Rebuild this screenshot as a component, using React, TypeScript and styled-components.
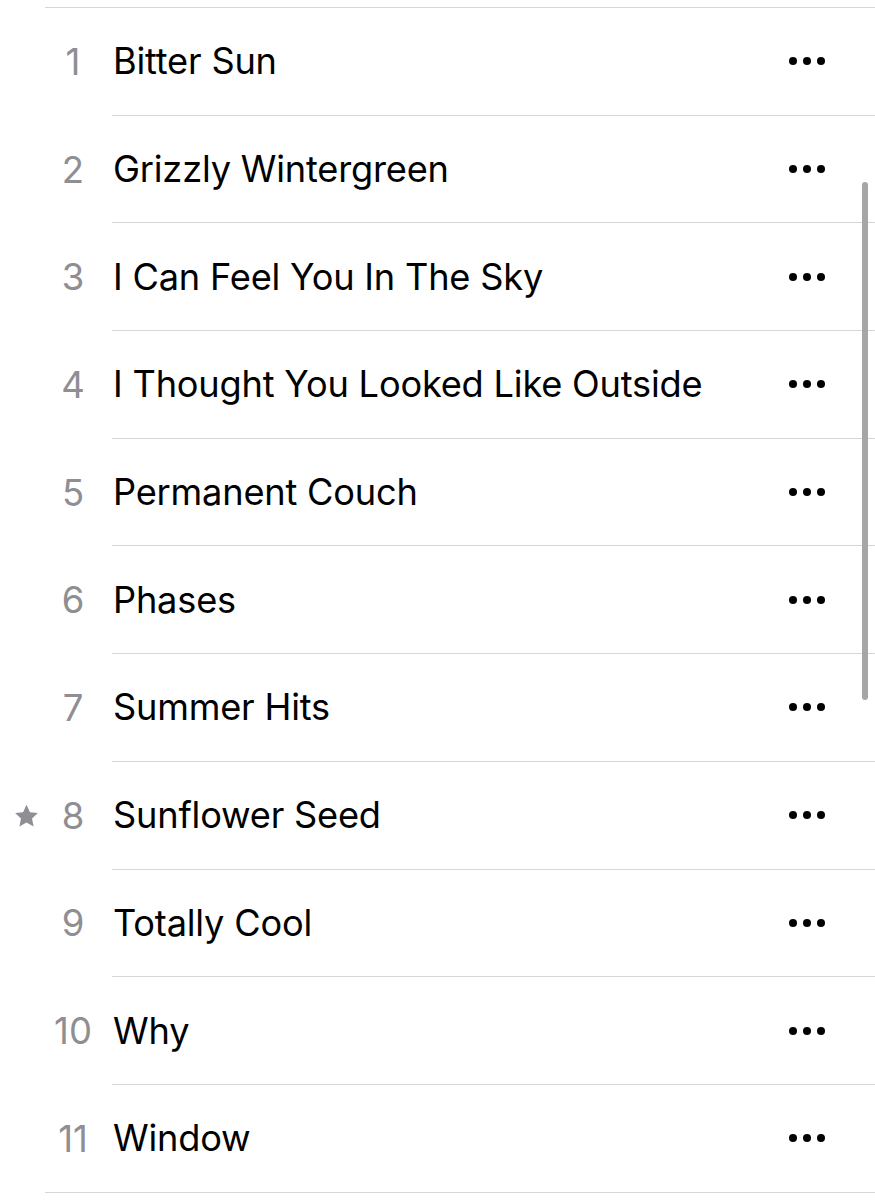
import React from "react";
import styled, { createGlobalStyle } from "styled-components";

const Global = createGlobalStyle`
  html, body { margin: 0; padding: 0; background: #ffffff; }
  body { font-family: Inter, "Noto Sans", "Liberation Sans", sans-serif; -webkit-font-smoothing: antialiased; }
`;

const Page = styled.div`
  position: relative;
  width: 875px;
  height: 1200px;
  overflow: hidden;
  background: #fff;
  padding-top: 7px;
  box-sizing: border-box;
`;

const List = styled.ul`
  list-style: none;
  margin: 0 0 0 45px;
  padding: 0;
  border-top: 1.5px solid #d6d6d9;
`;

const Row = styled.li`
  display: flex;
  height: 107.7px;
  margin-left: -45px;
  box-sizing: border-box;
`;

const Lead = styled.div`
  display: grid;
  grid-template-columns: 53px 40px;
  align-items: center;
  width: 112px;
  flex: none;
`;

const Star = styled.span`
  display: flex;
  justify-content: center;
  align-items: center;
  color: #8e8e93;
`;

const Num = styled.span`
  text-align: center;
  font-size: 36.5px;
  color: #8e8e93;
`;

const Content = styled.div<{ $last?: boolean }>`
  flex: 1;
  display: flex;
  align-items: center;
  justify-content: space-between;
  padding-right: 50px;
  border-bottom: 1.5px solid #d6d6d9;
  margin-left: ${(p) => (p.$last ? "-67px" : "0")};
  padding-left: ${(p) => (p.$last ? "67px" : "0")};
`;

const Title = styled.span`
  font-size: 36.2px;
  color: #000;
  padding-left: 1px;
  letter-spacing: -0.2px;
`;

const More = styled.div`
  display: flex;
  gap: 6px;
`;

const Dot = styled.span`
  width: 8px;
  height: 8px;
  border-radius: 50%;
  background: #000;
`;

const Scrollbar = styled.div`
  position: absolute;
  left: 862px;
  top: 182px;
  width: 6px;
  height: 518px;
  border-radius: 3px;
  background: #a6a6a6;
`;

const tracks = [
  "Bitter Sun",
  "Grizzly Wintergreen",
  "I Can Feel You In The Sky",
  "I Thought You Looked Like Outside",
  "Permanent Couch",
  "Phases",
  "Summer Hits",
  "Sunflower Seed",
  "Totally Cool",
  "Why",
  "Window",
];

const StarIcon = () => (
  <svg width="25" height="24" viewBox="0 0 24 23">
    <path
      d="M12 0.8l3.3 7 7.6 0.9-5.6 5.2 1.5 7.6L12 17.7l-6.8 3.8 1.5-7.6L1.1 8.7l7.6-0.9z"
      fill="currentColor"
    />
  </svg>
);

export default function App() {
  return (
    <>
      <Global />
      <Page>
        <List>
          {tracks.map((t, i) => {
            const last = i === tracks.length - 1;
            return (
              <Row key={t}>
                <Lead>
                  <Star>{i === 7 ? <StarIcon /> : null}</Star>
                  <Num>{i + 1}</Num>
                </Lead>
                <Content $last={last}>
                  <Title>{t}</Title>
                  <More>
                    <Dot />
                    <Dot />
                    <Dot />
                  </More>
                </Content>
              </Row>
            );
          })}
        </List>
        <Scrollbar />
      </Page>
    </>
  );
}
